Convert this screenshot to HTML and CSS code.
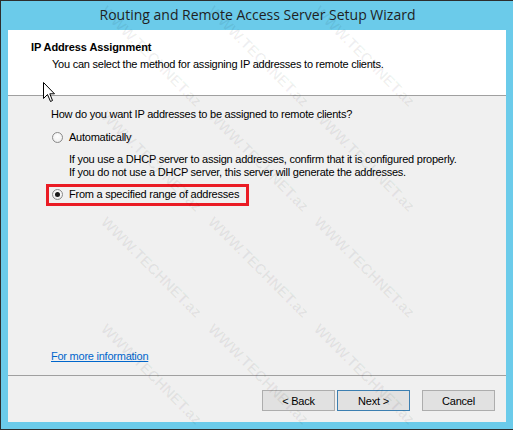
FILE: index.html
```html
<!DOCTYPE html>
<html>
<head>
<meta charset="utf-8">
<link rel="stylesheet" href="styles.css">
</head>
<body>
<div class="window">
  <div class="titlebar">Routing and Remote Access Server Setup Wizard</div>
  <div class="dialog">
    <div class="header">
      <div class="h-title">IP Address Assignment</div>
      <div class="h-sub">You can select the method for assigning IP addresses to remote clients.</div>
    </div>
    <div class="content">
      <p class="question">How do you want IP addresses to be assigned to remote clients?</p>
      <label class="option"><span class="radio"></span>Automatically</label>
      <div class="desc">If you use a DHCP server to assign addresses, confirm that it is configured properly.<br>If you do not use a DHCP server, this server will generate the addresses.</div>
      <div class="highlight">
        <label class="option"><span class="radio checked"></span>From a specified range of addresses</label>
      </div>
      <a class="link" href="#">For more information</a>
    </div>
    <div class="footer">
      <button class="btn">&lt; Back</button>
      <button class="btn default">Next &gt;</button>
      <button class="btn cancel">Cancel</button>
    </div>
  </div>
  <div class="watermarks">
    <span class="wm c1 r1">WWW.TECHNET.az</span>
    <span class="wm c2 r1">WWW.TECHNET.az</span>
    <span class="wm c3 r1">WWW.TECHNET.az</span>
    <span class="wm c1 r2">WWW.TECHNET.az</span>
    <span class="wm c2 r2">WWW.TECHNET.az</span>
    <span class="wm c3 r2">WWW.TECHNET.az</span>
    <span class="wm c1 r3">WWW.TECHNET.az</span>
    <span class="wm c2 r3">WWW.TECHNET.az</span>
    <span class="wm c3 r3">WWW.TECHNET.az</span>
    <span class="wm c1 r4">WWW.TECHNET.az</span>
    <span class="wm c2 r4">WWW.TECHNET.az</span>
    <span class="wm c3 r4">WWW.TECHNET.az</span>
  </div>
  <svg class="cursor" width="13" height="21" viewBox="0 0 13 21">
    <path d="M0.5 0.5 L0.5 16.5 L4.5 12.5 L7.5 19.5 L9.5 18.5 L6.8 11.8 L11.5 11.8 Z" fill="#fff" stroke="#000" stroke-width="1"/>
  </svg>
</div>
</body>
</html>
```

FILE: styles.css
```css
html, body {
  margin: 0;
  padding: 0;
  background: #2d2d2d;
}
body {
  width: 513px;
  height: 430px;
  overflow: hidden;
}
.window {
  position: relative;
  box-sizing: border-box;
  width: 512px;
  height: 428px;
  margin-top: 1px;
  margin-left: 1px;
  background: #6bcbea;
  padding: 0 6px 7px 7px;
  display: flex;
  flex-direction: column;
  overflow: hidden;
}
.titlebar {
  height: 29px;
  line-height: 28px;
  text-align: center;
  font-family: "Open Sans", "Noto Sans", sans-serif;
  font-size: 14px;
  color: #1f1f1f;
}
.dialog {
  width: 498px;
  height: 392px;
  background: #f0f0f0;
  display: flex;
  flex-direction: column;
  font-family: "Liberation Sans", Arial, sans-serif;
  font-size: 11px;
  line-height: 13px;
  letter-spacing: -0.24px;
  color: #000;
}
.header {
  box-sizing: border-box;
  background: #fff;
  border-bottom: 1px solid #a0a0a0;
  height: 66px;
  padding: 11px 0 0 23px;
}
.h-title {
  font-weight: bold;
  letter-spacing: -0.1px;
}
.h-sub {
  margin-top: 4px;
  padding-left: 21px;
}
.content {
  flex: 1;
  display: flex;
  flex-direction: column;
  align-items: flex-start;
  padding: 12px 0 12px 38px;
}
.question {
  margin: 0 0 0 5px;
}
.option {
  display: flex;
  align-items: center;
  height: 13px;
  white-space: nowrap;
}
.content > .option {
  margin: 10px 0 0 6px;
}
.radio {
  box-sizing: border-box;
  flex: none;
  width: 11px;
  height: 11px;
  border-radius: 50%;
  border: 1px solid #8a8a8a;
  background: radial-gradient(circle at 50% 40%, #ffffff 0%, #f4f4f4 55%, #dcdcdc 100%);
  margin-right: 6px;
  position: relative;
}
.radio.checked::after {
  content: "";
  position: absolute;
  left: 2px;
  top: 2px;
  width: 5px;
  height: 5px;
  border-radius: 50%;
  background: #1a1a1a;
}
.desc {
  margin: 9px 0 0 23px;
  white-space: nowrap;
}
.highlight {
  box-sizing: border-box;
  width: 203px;
  height: 22px;
  margin-top: 5px;
  border: 3px solid #ea1b24;
  padding: 1px 0 0 3px;
}
.link {
  margin-top: auto;
  margin-left: 5px;
  color: #0066cc;
  text-decoration: underline;
}
.footer {
  height: 47px;
  box-sizing: border-box;
  border-top: 1px solid #a0a0a0;
  display: flex;
  justify-content: flex-end;
  align-items: flex-start;
  padding: 14px 11px 0 0;
}
.btn {
  box-sizing: border-box;
  width: 73px;
  height: 21px;
  margin: 0 0 0 2px;
  padding: 0;
  border: 1px solid #adadad;
  background: #e1e1e1;
  font-family: "Liberation Sans", Arial, sans-serif;
  font-size: 11px;
  letter-spacing: -0.2px;
  color: #000;
}
.btn.default {
  border-color: #3c7fb1;
}
.btn.cancel {
  margin-left: 12px;
}
.watermarks {
  position: absolute;
  inset: 0;
  pointer-events: none;
}
.wm {
  position: absolute;
  transform-origin: left top;
  transform: rotate(45deg);
  font-family: "Liberation Sans", Arial, sans-serif;
  font-weight: bold;
  font-size: 15px;
  line-height: 17px;
  color: rgba(0, 0, 0, 0.06);
  white-space: nowrap;
}
.c1 { left: 109px; }
.c2 { left: 216px; }
.c3 { left: 322px; }
.r1 { top: 1px; }
.r2 { top: 106px; }
.r3 { top: 212px; }
.r4 { top: 319px; }
.cursor {
  position: absolute;
  left: 42px;
  top: 81px;
}
```
